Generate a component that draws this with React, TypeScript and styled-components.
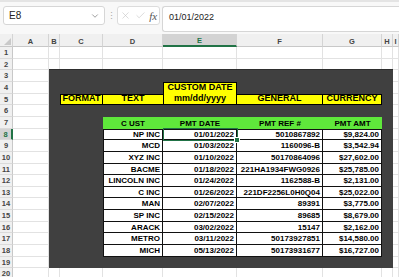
import React from 'react';
import styled, { createGlobalStyle } from 'styled-components';
import { X, Check, ChevronDown } from 'lucide-react';

const GlobalStyle = createGlobalStyle`
  html, body {
    margin: 0;
    padding: 0;
    background: #ffffff;
    font-family: "Liberation Sans", Arial, sans-serif;
  }
`;

const COLS = ['A', 'B', 'C', 'D', 'E', 'F', 'G', 'H', 'I'];
const ROW_HEIGHTS = [12, 11, 12, 12, 11, 12, 12, 11, 12, 12, 11, 12, 11, 12, 12, 11, 12, 12, 11, 12];

const payments = [
  { cust: 'NP INC', date: '01/01/2022', ref: '5010867892', amt: '$9,824.00' },
  { cust: 'MCD', date: '01/03/2022', ref: '1160096-B', amt: '$3,542.94' },
  { cust: 'XYZ INC', date: '01/10/2022', ref: '50170864096', amt: '$27,602.00' },
  { cust: 'BACME', date: '01/18/2022', ref: '221HA1934FWG0926', amt: '$25,785.00' },
  { cust: 'LINCOLN INC', date: '01/24/2022', ref: '1162588-B', amt: '$2,131.00' },
  { cust: 'C INC', date: '01/26/2022', ref: '221DF2256L0H0Q04', amt: '$25,022.00' },
  { cust: 'MAN', date: '02/07/2022', ref: '89391', amt: '$3,775.00' },
  { cust: 'SP INC', date: '02/15/2022', ref: '89685', amt: '$8,679.00' },
  { cust: 'ARACK', date: '03/02/2022', ref: '15147', amt: '$2,162.00' },
  { cust: 'METRO', date: '03/11/2022', ref: '50173927851', amt: '$14,580.00' },
  { cust: 'MICH', date: '05/13/2022', ref: '50173931677', amt: '$16,727.00' },
];

const Page = styled.div`
  width: 399px;
  height: 277px;
  overflow: hidden;
  background: #ffffff;
`;

const FormulaBar = styled.div`
  height: 34px;
  box-sizing: border-box;
  display: flex;
  align-items: flex-start;
  padding: 6px 0 0 3px;
  background: #f8f8f8;
  border-top: 2px solid #e4e4e4;
`;

const NameBox = styled.div`
  width: 102px;
  height: 19px;
  box-sizing: border-box;
  display: flex;
  align-items: center;
  justify-content: space-between;
  padding: 0 4px 0 5px;
  background: #ffffff;
  border: 1px solid #d6d6d6;
  border-radius: 3px;
  font-size: 10px;
  color: #222;
  margin-top: -2px;
`;

const Grip = styled.div`
  width: 12px;
  height: 19px;
  display: flex;
  align-items: center;
  justify-content: center;
  color: #a8a8a8;
  font-size: 9px;
  margin-top: -2px;
`;

const FxButtons = styled.div`
  width: 43px;
  height: 19px;
  box-sizing: border-box;
  display: flex;
  align-items: center;
  justify-content: space-around;
  background: #ffffff;
  border: 1px solid #dcdcdc;
  border-radius: 3px;
  color: #c4c4c4;
  margin-top: -2px;
`;

const FxLabel = styled.span`
  font-family: "Liberation Serif", "Times New Roman", serif;
  font-style: italic;
  font-size: 11px;
  color: #555;
`;

const FormulaInput = styled.div`
  flex: 1;
  height: 26px;
  box-sizing: border-box;
  margin-left: 2px;
  margin-top: -2px;
  padding: 5px 0 0 6px;
  background: #ffffff;
  border: 1px solid #d6d6d6;
  border-right: none;
  border-radius: 3px 0 0 3px;
  font-size: 9px;
  color: #222;
`;

const Sheet = styled.div`
  display: grid;
  grid-template-columns: 13px 36px 11px 43px 60px 74px 86px 59px 11px 1fr;
  grid-template-rows: 13px ${ROW_HEIGHTS.map((h) => `${h}px`).join(' ')};
  font-size: 8px;
`;

const Corner = styled.div`
  grid-column: 1;
  grid-row: 1;
  background: #f0f0f0;
  border-right: 1px solid #d4d4d4;
  border-bottom: 1px solid #c8c8c8;
  position: relative;
  &::after {
    content: '';
    position: absolute;
    right: 1px;
    bottom: 1px;
    border-left: 7px solid transparent;
    border-bottom: 7px solid #c9c9c9;
  }
`;

const ColHeader = styled.div<{ $col: number; $active?: boolean }>`
  grid-column: ${(p) => p.$col};
  grid-row: 1;
  display: flex;
  align-items: center;
  justify-content: center;
  background: ${(p) => (p.$active ? '#d3d3d3' : '#f0f0f0')};
  border-right: 1px solid #d4d4d4;
  border-bottom: ${(p) => (p.$active ? '2px solid #217346' : '1px solid #c8c8c8')};
  color: ${(p) => (p.$active ? '#217346' : '#444')};
  font-weight: 700;
  font-size: 7.5px;
  padding-top: 2px;
`;

const RowHeader = styled.div<{ $row: number; $active?: boolean }>`
  grid-column: 1;
  grid-row: ${(p) => p.$row + 1};
  display: flex;
  align-items: center;
  justify-content: center;
  background: ${(p) => (p.$active ? '#d3d3d3' : '#f0f0f0')};
  border-right: ${(p) => (p.$active ? '2px solid #217346' : '1px solid #c8c8c8')};
  border-bottom: 1px solid #dadada;
  color: ${(p) => (p.$active ? '#217346' : '#444')};
  font-weight: 700;
  font-size: 7.5px;
`;

const GridCell = styled.div<{ $row: number; $col: number }>`
  grid-column: ${(p) => p.$col};
  grid-row: ${(p) => p.$row + 1};
  border-right: 1px solid #e2e2e2;
  border-bottom: 1px solid #e2e2e2;
`;

const DarkBlock = styled.div`
  grid-column: 3 / 10;
  grid-row: 4 / 21;
  background: #404040;
  border-top: 1px solid #2e2e2e;
  margin-top: -1px;
  z-index: 1;
`;

const Label = styled.div<{ $row: number; $col: number; $span?: number; $noLeft?: boolean; $noRight?: boolean }>`
  grid-column: ${(p) => p.$col};
  grid-row: ${(p) => p.$row + 1} / span ${(p) => p.$span ?? 1};
  z-index: 2;
  background: #ffff00;
  border: 1px solid #000;
  border-left: ${(p) => (p.$noLeft ? 'none' : '1px solid #000')};
  border-right: ${(p) => (p.$noRight ? 'none' : '1px solid #000')};
  display: flex;
  flex-direction: column;
  align-items: center;
  justify-content: flex-end;
  font-weight: 700;
  font-size: 9px;
  line-height: 11px;
  color: #000;
  white-space: nowrap;
`;

const GreenCell = styled.div<{ $col: number }>`
  grid-column: ${(p) => p.$col};
  grid-row: 8;
  z-index: 2;
  background: #5fe83b;
  display: flex;
  align-items: center;
  justify-content: center;
  font-weight: 700;
  font-size: 8px;
  color: #000;
  white-space: nowrap;
`;

const DataCell = styled.div<{ $row: number; $col: number }>`
  grid-column: ${(p) => p.$col};
  grid-row: ${(p) => p.$row + 1};
  z-index: 2;
  background: #ffffff;
  border-right: 1px solid #111;
  border-bottom: 1px solid #111;
  border-left: ${(p) => (p.$col === 5 ? '1px solid #111' : 'none')};
  border-top: ${(p) => (p.$row === 8 ? '1px solid #111' : 'none')};
  display: flex;
  align-items: center;
  justify-content: flex-end;
  padding-right: 2px;
  font-weight: 700;
  font-size: 8px;
  color: #000;
  white-space: nowrap;
  overflow: hidden;
`;

const Selection = styled.div`
  grid-column: 6;
  grid-row: 9;
  z-index: 3;
  margin: -1px -1px -1px 0;
  border: 1.5px solid #217346;
  position: relative;
  pointer-events: none;
`;

const FillHandle = styled.span`
  position: absolute;
  right: -3px;
  bottom: -3px;
  width: 4px;
  height: 4px;
  background: #217346;
  border: 1px solid #ffffff;
`;

export default function App() {
  const dataCols: (keyof (typeof payments)[number])[] = ['cust', 'date', 'ref', 'amt'];

  return (
    <Page>
      <GlobalStyle />
      <FormulaBar>
        <NameBox>
          <span>E8</span>
          <ChevronDown size={10} color="#666" strokeWidth={1.5} />
        </NameBox>
        <Grip>⋮</Grip>
        <FxButtons>
          <X size={11} strokeWidth={1.3} />
          <Check size={11} strokeWidth={1.3} />
          <FxLabel>fx</FxLabel>
        </FxButtons>
        <FormulaInput>01/01/2022</FormulaInput>
      </FormulaBar>

      <Sheet>
        <Corner />
        {COLS.map((c, i) => (
          <ColHeader key={c} $col={i + 2} $active={c === 'E'}>
            {c}
          </ColHeader>
        ))}
        {ROW_HEIGHTS.map((_, i) => (
          <RowHeader key={i} $row={i + 1} $active={i + 1 === 8}>
            {i + 1}
          </RowHeader>
        ))}
        {ROW_HEIGHTS.map((_, r) =>
          COLS.map((c, ci) => <GridCell key={`${c}${r}`} $row={r + 1} $col={ci + 2} />)
        )}

        <DarkBlock />

        <Label $row={5} $col={4}>FORMAT</Label>
        <Label $row={5} $col={5} $noLeft $noRight>TEXT</Label>
        <Label $row={4} $col={6} $span={2}>
          <span>CUSTOM DATE</span>
          <span>mm/dd/yyyy</span>
        </Label>
        <Label $row={5} $col={7} $noLeft>GENERAL</Label>
        <Label $row={5} $col={8} $noLeft>CURRENCY</Label>

        <GreenCell $col={5}>C UST</GreenCell>
        <GreenCell $col={6}>PMT DATE</GreenCell>
        <GreenCell $col={7}>PMT REF #</GreenCell>
        <GreenCell $col={8}>PMT AMT</GreenCell>

        {payments.map((p, r) =>
          dataCols.map((key, ci) => (
            <DataCell key={`${key}${r}`} $row={r + 8} $col={ci + 5}>
              {p[key]}
            </DataCell>
          ))
        )}

        <Selection>
          <FillHandle />
        </Selection>
      </Sheet>
    </Page>
  );
}
